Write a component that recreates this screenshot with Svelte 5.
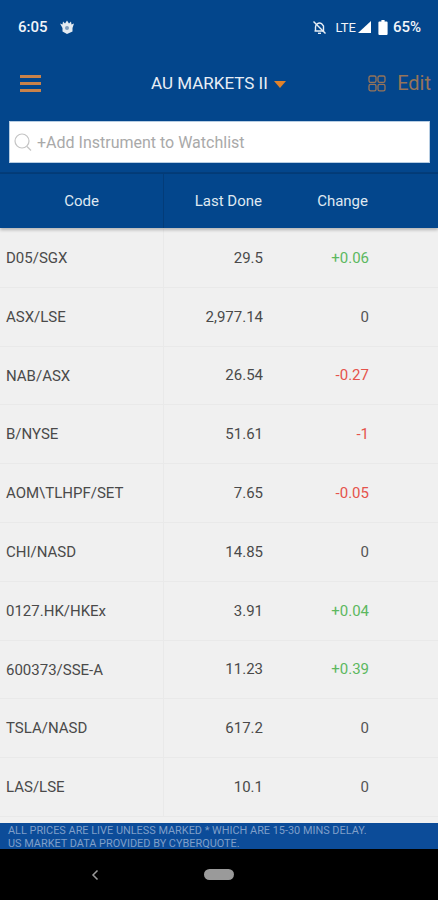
<script>
  const rows = [
    { code: 'D05/SGX', last: '29.5', change: '+0.06', tone: 'up' },
    { code: 'ASX/LSE', last: '2,977.14', change: '0', tone: '' },
    { code: 'NAB/ASX', last: '26.54', change: '-0.27', tone: 'down' },
    { code: 'B/NYSE', last: '51.61', change: '-1', tone: 'down' },
    { code: 'AOM\\TLHPF/SET', last: '7.65', change: '-0.05', tone: 'down' },
    { code: 'CHI/NASD', last: '14.85', change: '0', tone: '' },
    { code: '0127.HK/HKEx', last: '3.91', change: '+0.04', tone: 'up' },
    { code: '600373/SSE-A', last: '11.23', change: '+0.39', tone: 'up' },
    { code: 'TSLA/NASD', last: '617.2', change: '0', tone: '' },
    { code: 'LAS/LSE', last: '10.1', change: '0', tone: '' }
  ];
</script>

<div class="screen">
  <header class="top">
    <div class="status">
      <span class="time">6:05</span>
      <svg class="notif" width="16" height="16" viewBox="0 0 16 16">
        <path d="M1 4.500l2.500 1 .5-3 2 2 2-3 2 3 2-2 .5 3 2.500-1-1.500 4.500v3.500L8 15l-4.500-2.500V9z" fill="#e4ebf2" />
        <circle cx="8" cy="9" r="2" fill="#7d9cbd" />
      </svg>
      <span class="spacer"></span>
      <svg class="mute" width="15" height="15" viewBox="0 0 15 15" fill="none" stroke="#e8eef5" stroke-width="1.400">
        <path d="M3.500 11V7a4 4 0 0 1 6-3.400L11.500 6v5H2.500" />
        <path d="M6 13.300h3" />
        <path d="M1.500 1.500l12 12" />
      </svg>
      <span class="lte">LTE</span>
      <svg class="signal" width="15" height="14" viewBox="0 0 15 14"><path d="M14 1v12H1z" fill="#fff" /></svg>
      <svg class="batt" width="10" height="15" viewBox="0 0 10 15"><path d="M3.400 0h3.200v1.400H8.600a1 1 0 0 1 1 1V14a1 1 0 0 1-1 1H1.400a1 1 0 0 1-1-1V2.400a1 1 0 0 1 1-1h2z" fill="#fff" /></svg>
      <span class="pct">65%</span>
    </div>

    <div class="bar">
      <div class="burger"><i></i><i></i><i></i></div>
      <div class="title">AU MARKETS II <span class="caret"></span></div>
      <div class="edit">
        <svg width="18" height="17" viewBox="0 0 18 17" fill="none" stroke="#96745a" stroke-width="1.300">
          <rect x="1" y="1" width="7" height="6.400" rx="1.600" />
          <rect x="10" y="1" width="7" height="6.400" rx="1.600" />
          <rect x="1" y="9.400" width="7" height="6.400" rx="1.600" />
          <rect x="10" y="9.400" width="7" height="6.400" rx="1.600" />
        </svg>
        <span>Edit</span>
      </div>
    </div>

    <div class="search">
      <svg width="20" height="22" viewBox="0 0 20 22" fill="none" stroke="#c4c4c4" stroke-width="1.200">
        <circle cx="9" cy="10" r="7" />
        <path d="M14 15.500l4 4" />
      </svg>
      <span>+Add Instrument to Watchlist</span>
    </div>
  </header>

  <div class="thead">
    <div class="c-code">Code</div>
    <div class="c-last">Last Done</div>
    <div class="c-change">Change</div>
  </div>

  <div class="list">
    {#each rows as row}
      <div class="row">
        <div class="code">{row.code}</div>
        <div class="last">{row.last}</div>
        <div class="change {row.tone}">{row.change}</div>
      </div>
    {/each}
  </div>

  <footer class="note">
    <div>ALL PRICES ARE LIVE UNLESS MARKED * WHICH ARE 15-30 MINS DELAY.</div>
    <div>US MARKET DATA PROVIDED BY CYBERQUOTE.</div>
  </footer>

  <nav class="sysnav">
    <svg width="10" height="12" viewBox="0 0 10 12" fill="none" stroke="#9a9a9a" stroke-width="1.500"><path d="M7.500 1.500L3 6l4.500 4.500" /></svg>
    <span class="pill"></span>
  </nav>
</div>

<style>
  :global(body) {
    margin: 0;
    background: #000;
  }

  .screen {
    width: 438px;
    height: 900px;
    display: flex;
    flex-direction: column;
    overflow: hidden;
    background: #f0f0f0;
    font-family: Roboto, 'Liberation Sans', sans-serif;
  }

  .top {
    background: #03468c;
    height: 174px;
    box-sizing: border-box;
    border-bottom: 2px solid #033c79;
    flex: none;
  }

  .status {
    height: 54px;
    display: flex;
    align-items: center;
    padding: 0 17px 0 18px;
    color: #f2f5f9;
    font-size: 15px;
    font-weight: 500;
    gap: 3px;
  }

  .time {
    margin-right: 8px;
  }

  .spacer {
    flex: 1;
  }

  .lte {
    font-size: 13px;
    font-weight: 400;
    margin-left: 5px;
  }

  .signal {
    margin-left: -2px;
  }

  .batt {
    margin-left: 3px;
  }

  .pct {
    margin-left: 2px;
  }

  .bar {
    height: 58px;
    display: flex;
    align-items: center;
    position: relative;
    padding: 0 7px 0 20px;
    justify-content: space-between;
  }

  .burger {
    width: 21px;
    display: flex;
    flex-direction: column;
    gap: 4px;
  }

  .burger i {
    display: block;
    height: 3px;
    background: #c9824a;
  }

  .title {
    position: absolute;
    left: 151px;
    color: #e8eef5;
    font-size: 17px;
    display: flex;
    align-items: center;
    white-space: pre;
  }

  .caret {
    width: 0;
    height: 0;
    margin-left: 2px;
    margin-top: 2px;
    border-left: 6.500px solid transparent;
    border-right: 6.500px solid transparent;
    border-top: 7px solid #e0822a;
  }

  .edit {
    display: flex;
    align-items: center;
    gap: 11px;
    color: #96745a;
    font-size: 20px;
  }

  .search {
    margin: 9px 8px 0 9px;
    height: 42px;
    box-sizing: border-box;
    background: #fff;
    border: 1px solid #b7cde2;
    display: flex;
    align-items: center;
    gap: 4px;
    padding-left: 3px;
    color: #a9a9a9;
    font-size: 16px;
  }

  .thead {
    height: 54px;
    flex: none;
    display: flex;
    align-items: center;
    background: #03468c;
    color: #dfe8f1;
    font-size: 15px;
    box-shadow: 0 2px 3px rgba(0, 0, 0, 0.25);
    position: relative;
  }

  .c-code {
    width: 164px;
    text-align: center;
    height: 100%;
    line-height: 54px;
    box-sizing: border-box;
    border-right: 1px solid #033c79;
  }

  .c-last {
    width: 98px;
    text-align: right;
  }

  .c-change {
    width: 106px;
    text-align: right;
  }

  .list {
    flex: 1;
    padding-top: 1px;
  }

  .row {
    height: 58.800px;
    box-sizing: border-box;
    display: flex;
    align-items: center;
    border-bottom: 1px solid #e9e9e9;
    font-size: 15px;
    color: #4a4a4a;
  }

  .code {
    width: 164px;
    padding-left: 6px;
    box-sizing: border-box;
    border-right: 1px solid #e9e9e9;
    height: 100%;
    line-height: 58px;
  }

  .last {
    width: 99px;
    text-align: right;
  }

  .change {
    width: 106px;
    text-align: right;
    color: #555;
  }

  .up {
    color: #5cb85f;
  }

  .down {
    color: #e5534b;
  }

  .note {
    height: 26px;
    flex: none;
    box-sizing: border-box;
    background: #0c4c99;
    color: #7f9fc9;
    font-size: 10.900px;
    line-height: 12.500px;
    padding: 2px 8px 0;
    white-space: nowrap;
  }

  .sysnav {
    height: 51px;
    flex: none;
    background: #000;
    display: flex;
    align-items: center;
    position: relative;
  }

  .sysnav svg {
    margin-left: 90px;
  }

  .pill {
    width: 30px;
    height: 11px;
    border-radius: 6px;
    background: #9a9a9a;
    margin-left: 104px;
  }
</style>
